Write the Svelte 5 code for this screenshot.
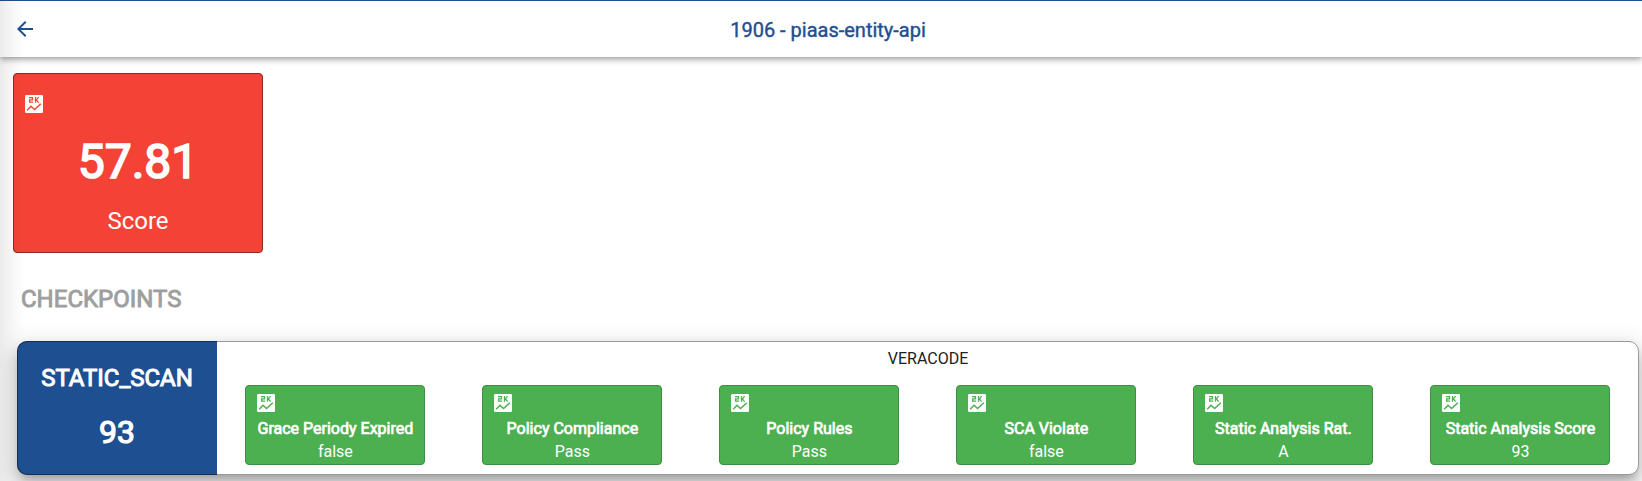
<script>
  const checks = [
    { name: 'Grace Periody Expired', value: 'false' },
    { name: 'Policy Compliance', value: 'Pass' },
    { name: 'Policy Rules', value: 'Pass' },
    { name: 'SCA Violate', value: 'false' },
    { name: 'Static Analysis Rat.', value: 'A' },
    { name: 'Static Analysis Score', value: '93' }
  ];
</script>

{#snippet chartIcon()}
  <svg class="icon" viewBox="0 0 18 18" aria-hidden="true">
    <rect width="18" height="18" rx="1.3" fill="#fff" />
    <g fill="none" stroke="currentColor">
      <path stroke-width="1.25" d="M4 2.7H7.5V4.9H4.6V7.1H8.1M10.5 2.1V7.7M13.6 2.1L11.4 4.9L13.6 7.7" />
      <path stroke-width="1.5" d="M2.2 15.2L6 11.3L9.6 14.5L15.8 8.8" />
    </g>
  </svg>
{/snippet}

<div class="page">
  <header>
    <svg class="back" viewBox="0 0 24 24" aria-hidden="true">
      <path fill="currentColor" d="M20 11H7.83l5.59-5.59L12 4l-8 8 8 8 1.41-1.41L7.83 13H20v-2z" />
    </svg>
    <h1>1906 - piaas-entity-api</h1>
  </header>
  <main>
    <section class="score">
      {@render chartIcon()}
      <strong>57.81</strong>
      <span>Score</span>
    </section>
    <h2>CHECKPOINTS</h2>
    <section class="checkpoint">
      <div class="summary">
        <div class="kind">STATIC_SCAN</div>
        <div class="total">93</div>
      </div>
      <div class="detail">
        <div class="tool">VERACODE</div>
        <div class="checks">
          {#each checks as check}
            <div class="check">
              {@render chartIcon()}
              <div class="name">{check.name}</div>
              <div class="value">{check.value}</div>
            </div>
          {/each}
        </div>
      </div>
    </section>
  </main>
  <div class="edge"></div>
</div>

<style>
  :global(body) { margin: 0; background: #fff; overflow: hidden; }
  .page {
    position: relative;
    height: 481px;
    overflow: hidden;
    font-family: Roboto, sans-serif;
    font-size: 16px;
    color: #212121;
  }
  .page * { box-sizing: border-box; }
  header {
    position: relative;
    display: flex;
    align-items: flex-start;
    height: 57px;
    padding: 16px 0 0 13px;
    border-top: 1px solid #1e4f91;
    background: #fff;
    color: #1e4f91;
    box-shadow: 0 2px 4px -1px rgba(0,0,0,.2), 0 4px 5px rgba(0,0,0,.14), 0 1px 10px rgba(0,0,0,.12);
  }
  .back { width: 24px; height: 24px; }
  h1 {
    flex: 1;
    margin: -1px 23px 0 0;
    text-align: center;
    font-size: 20px;
    line-height: 28px;
    font-weight: 400;
    -webkit-text-stroke: .4px currentColor;
  }
  main { padding: 16px 3px 0 13px; }
  .icon { display: block; width: 18px; height: 18px; }
  .score {
    display: flex;
    flex-direction: column;
    width: 250px;
    height: 180px;
    padding: 21px 11px 0;
    border: 1px solid #922820;
    border-radius: 4px;
    background: #f44336;
    color: #fff;
    text-align: center;
  }
  .score .icon { color: #f44336; }
  .score strong {
    margin-top: 19px;
    font-size: 48px;
    line-height: 60px;
    font-weight: 400;
    -webkit-text-stroke: 1.7px #fff;
  }
  .score span { margin-top: 13px; font-size: 24px; line-height: 32px; }
  h2 {
    margin: 30px 0 0 8px;
    font-size: 24px;
    line-height: 32px;
    font-weight: 400;
    color: #9e9e9e;
    -webkit-text-stroke: .9px currentColor;
  }
  .checkpoint {
    display: flex;
    height: 134px;
    margin: 26px 0 0 4px;
    border: 1px solid #999;
    border-radius: 10px;
    background: #fff;
    box-shadow: 0 7px 8px -4px rgba(0,0,0,.2), 0 12px 17px 2px rgba(0,0,0,.14), 0 5px 22px 4px rgba(0,0,0,.12);
  }
  .summary {
    width: 200px;
    margin: -1px 0 -1px -1px;
    padding: 20px 1px 0 0;
    border: 1px solid #122f57;
    border-right: 0;
    border-radius: 10px 0 0 10px;
    background: #1e4f91;
    color: #fff;
    text-align: center;
    -webkit-text-stroke: 1px #fff;
  }
  .kind { font-size: 24px; line-height: 32px; }
  .total { margin-top: 18px; font-size: 32px; line-height: 40px; -webkit-text-stroke-width: 1.2px; }
  .detail { flex: 1; padding: 5px 0 0 1px; }
  .tool { text-align: center; line-height: 24px; }
  .checks { display: flex; gap: 57px; margin: 14px 0 0 27.4px; }
  .check {
    flex: none;
    width: 180px;
    height: 80px;
    padding: 8px 0 0;
    border: 1px solid #3f8c42;
    border-radius: 4px;
    background: #4caf50;
    color: #fff;
    text-align: center;
    white-space: nowrap;
  }
  .check .icon { margin-left: 11px; color: #4caf50; }
  .name { margin-top: 4.5px; line-height: 24px; -webkit-text-stroke: .7px #fff; }
  .value { line-height: 22px; }
  .edge {
    position: absolute;
    inset: 0 auto 0 0;
    width: 28px;
    background: linear-gradient(90deg, rgba(0,0,0,.08), rgba(0,0,0,.035) 40%, rgba(0,0,0,.008) 75%, transparent);
    pointer-events: none;
  }
</style>
